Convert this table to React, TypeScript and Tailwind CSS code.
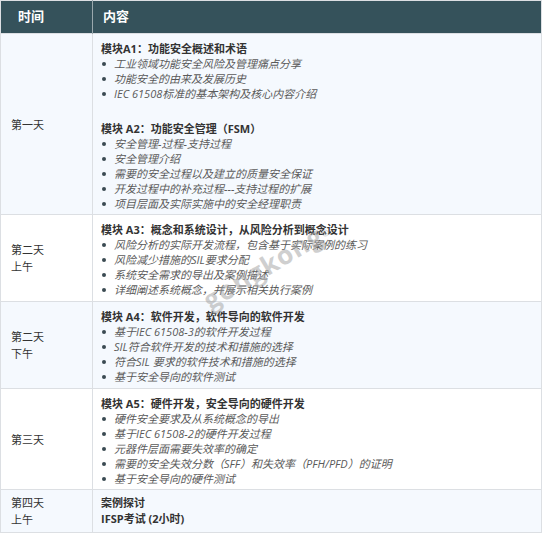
const font = { fontFamily: '"Open Sans", "Noto Sans CJK SC", sans-serif' };

type Block = { title: string; items: string[] };

const rows: { day: string[]; blocks: Block[]; tint: boolean; h: string }[] = [
  {
    day: ['第一天'],
    tint: true,
    h: 'h-[178px]',
    blocks: [
      {
        title: '模块A1：功能安全概述和术语',
        items: ['工业领域功能安全风险及管理痛点分享', '功能安全的由来及发展历史', 'IEC 61508标准的基本架构及核心内容介绍'],
      },
      {
        title: '模块 A2：功能安全管理（FSM）',
        items: [
          '安全管理-过程-支持过程',
          '安全管理介绍',
          '需要的安全过程以及建立的质量安全保证',
          '开发过程中的补充过程---支持过程的扩展',
          '项目层面及实际实施中的安全经理职责',
        ],
      },
    ],
  },
  {
    day: ['第二天', '上午'],
    tint: false,
    h: 'h-[87px]',
    blocks: [
      {
        title: '模块 A3：概念和系统设计，从风险分析到概念设计',
        items: ['风险分析的实际开发流程，包含基于实际案例的练习', '风险减少措施的SIL要求分配', '系统安全需求的导出及案例描述', '详细阐述系统概念，并展示相关执行案例'],
      },
    ],
  },
  {
    day: ['第二天', '下午'],
    tint: true,
    h: 'h-[87px]',
    blocks: [
      {
        title: '模块 A4：软件开发，软件导向的软件开发',
        items: ['基于IEC 61508-3的软件开发过程', 'SIL符合软件开发的技术和措施的选择', '符合SIL 要求的软件技术和措施的选择', '基于安全导向的软件测试'],
      },
    ],
  },
  {
    day: ['第三天'],
    tint: false,
    h: 'h-[101px]',
    blocks: [
      {
        title: '模块 A5：硬件开发，安全导向的硬件开发',
        items: [
          '硬件安全要求及从系统概念的导出',
          '基于IEC 61508-2的硬件开发过程',
          '元器件层面需要失效率的确定',
          '需要的安全失效分数（SFF）和失效率（PFH/PFD）的证明',
          '基于安全导向的硬件测试',
        ],
      },
    ],
  },
];

function Day({ lines }: { lines: string[] }) {
  return (
    <td className="w-[92px] border border-[#dcdfe3] pl-[10px] align-middle text-[11px] leading-[17px] text-[#333]">
      {lines.map((l) => (
        <div key={l}>{l}</div>
      ))}
    </td>
  );
}

export default function App() {
  return (
    <div className="relative h-[533px] w-[545px] overflow-hidden bg-white" style={font}>
      <table className="w-[542px] table-fixed border-collapse border border-[#dcdfe3]">
        <thead>
          <tr className="h-[33px] bg-[#35525b] text-left text-[13px] font-bold text-white">
            <th className="w-[92px] border-r border-[#9aa8ad] pl-[17px] font-bold">时间</th>
            <th className="pl-[10px] font-bold">内容</th>
          </tr>
        </thead>
        <tbody>
          {rows.map((r) => (
            <tr key={r.blocks[0].title} className={`${r.h} ${r.tint ? 'bg-[#f5f9fe]' : 'bg-white'}`}>
              <Day lines={r.day} />
              <td className="border border-[#dcdfe3] pb-[3px] pl-[8px] pt-[7px] align-top text-[11px] leading-[15px]">
                {r.blocks.map((b, i) => (
                  <div key={b.title} className={i > 0 ? 'mt-[20px]' : ''}>
                    <div className="font-bold text-[#333]">{b.title}</div>
                    <ul>
                      {b.items.map((it) => (
                        <li key={it} className="flex items-center italic text-[#5a5a5a]">
                          <span className="ml-[1px] mr-[8px] inline-block h-[4px] w-[4px] shrink-0 rounded-full bg-[#3a4a52]" />
                          {it}
                        </li>
                      ))}
                    </ul>
                  </div>
                ))}
              </td>
            </tr>
          ))}
          <tr className="h-[43px] bg-[#f5f9fe]">
            <Day lines={['第四天', '上午']} />
            <td className="border border-[#dcdfe3] pl-[8px] align-middle text-[11px] leading-[16px] text-[#333]">
              <div className="font-semibold">案例探讨</div>
              <div className="font-bold">IFSP考试 (2小时)</div>
            </td>
          </tr>
        </tbody>
      </table>
      {/* watermark */}
      <div className="pointer-events-none absolute left-[195px] top-[252px] -rotate-[31deg] select-none text-[#a0a0a0] opacity-50">
        <div className="text-[26px] font-bold leading-[26px] tracking-[1px]">gongkong<sup className="text-[9px]">®</sup></div>
      </div>
    </div>
  );
}
